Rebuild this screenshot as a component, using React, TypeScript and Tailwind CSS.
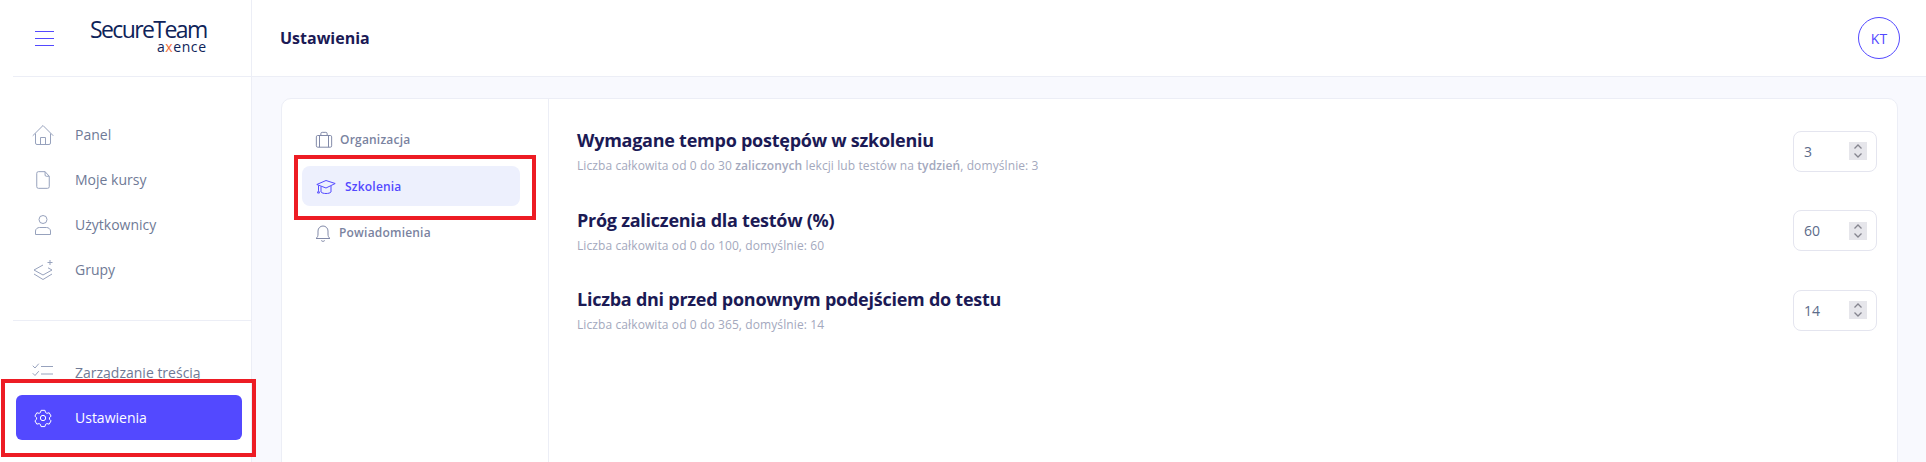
import type { ReactNode } from "react";

const iconClass = "h-6 w-6 shrink-0";

function HomeIcon() {
  return (
    <svg viewBox="0 0 24 24" fill="none" stroke="#97a2bd" strokeWidth="1" className={iconClass}>
      <path d="M2 12.500 12 2.500l10 10" strokeLinecap="round" strokeLinejoin="round" />
      <path d="M4.500 10.500V20A1.500 1.500 0 0 0 6 21.500h12a1.500 1.500 0 0 0 1.500-1.500v-9.500" />
      <path d="M9.500 21.500V14.500h5v7" />
    </svg>
  );
}

function FileIcon() {
  return (
    <svg viewBox="0 0 24 24" fill="none" stroke="#97a2bd" strokeWidth="1.200" className="mx-[2px] h-5 w-5 shrink-0">
      <path d="M6.500 2h8l5 5.500V20a2 2 0 0 1-2 2h-11a2 2 0 0 1-2-2V4a2 2 0 0 1 2-2Z" strokeLinejoin="round" />
      <path d="M14.500 2v4A1.500 1.500 0 0 0 16 7.500h3.500" />
    </svg>
  );
}

function UserIcon() {
  return (
    <svg viewBox="0 0 24 24" fill="none" stroke="#97a2bd" strokeWidth="1" className={iconClass}>
      <circle cx="12" cy="6.500" r="4" />
      <path d="M4.500 21.500V18c0-2 2-3.500 4-3.500h7c2 0 4 1.500 4 3.500v3.500Z" strokeLinejoin="round" />
    </svg>
  );
}

function LayersIcon() {
  return (
    <svg viewBox="0 0 24 24" fill="none" stroke="#97a2bd" strokeWidth="1" className={iconClass}>
      <path d="M12 7 3 12l9 5 9-5-4-2.200" strokeLinejoin="round" />
      <path d="m3 16 9 5.500 9-5.500" strokeLinejoin="round" />
      <path d="M19 2v5M16.500 4.500h5" />
    </svg>
  );
}

function ChecklistIcon() {
  return (
    <svg viewBox="0 0 24 24" fill="none" stroke="#97a2bd" strokeWidth="1" className={iconClass}>
      <path d="m2 5 2 2 3.500-4M2 12.500l2 2 3.500-4M3 20h3" strokeLinecap="round" strokeLinejoin="round" />
      <path d="M10 5.500h12M10 13h12M10 20.500h12" />
    </svg>
  );
}

function GearIcon() {
  return (
    <svg viewBox="0 0 24 24" fill="none" stroke="#ffffff" strokeWidth="1.200" className="mx-[2px] h-5 w-5 shrink-0">
      <circle cx="12" cy="12" r="3.200" />
      <path
        d="M9.700 2.800h4.600l.8 2.700 1.600.9 2.700-.7 2.300 4-2 2 .1 1.800 1.900 1.900-2.300 4-2.700-.7-1.600.9-.8 2.700H9.700l-.8-2.700-1.600-.9-2.700.7-2.300-4 2-1.900v-1.800l-2-2 2.300-4 2.700.7 1.600-.9Z"
        strokeLinejoin="round"
      />
    </svg>
  );
}

function BriefcaseIcon() {
  return (
    <svg viewBox="0 0 20 20" fill="none" stroke="#8189a8" strokeWidth="1.100" className="h-[18px] w-[18px] shrink-0">
      <rect x="1.500" y="5" width="17" height="13" rx="1.500" />
      <path d="M6.500 5V3A1.500 1.500 0 0 1 8 1.500h4A1.500 1.500 0 0 1 13.500 3v2M5 5v13M15 5v13" />
    </svg>
  );
}

function CapIcon() {
  return (
    <svg viewBox="0 0 20 20" fill="none" stroke="#5349ff" strokeWidth="1" className="h-5 w-5 shrink-0">
      <path d="M.8 7.500 10 3.500l9.200 3-9.200 4.500Z" strokeLinejoin="round" />
      <path d="M5 9.500V15c1.500 2 8.500 2 10 0V9" />
      <path d="M2.500 8.500v5M1.500 16l1-2.500 1 2.500Z" strokeLinejoin="round" />
    </svg>
  );
}

function BellIcon() {
  return (
    <svg viewBox="0 0 20 20" fill="none" stroke="#8189a8" strokeWidth="1" className="h-5 w-5 shrink-0">
      <path d="M3 15.500c1.500-1 2-2.500 2-4.500V8a5 5 0 0 1 10 0v3c0 2 .5 3.500 2 4.500Z" strokeLinejoin="round" />
      <path d="M8.500 17.800c.8.800 2.200.8 3 0" strokeLinecap="round" />
    </svg>
  );
}

function NavItem({ icon, label }: { icon: ReactNode; label: string }) {
  return (
    <div className="flex h-[45px] items-center pl-[31px] text-[14px] text-[#6f7a96]">
      {icon}
      <span className="ml-[20px]">{label}</span>
    </div>
  );
}

function SubNavItem({ icon, label, spacing }: { icon: ReactNode; label: string; spacing: string }) {
  return (
    <div className={`flex h-[46px] items-center text-[12px] font-semibold tracking-[0.2px] text-[#7a83a0] ${spacing}`}>
      {icon}
      <span>{label}</span>
    </div>
  );
}

function NumberBox({ value }: { value: string }) {
  return (
    <div className="flex h-[41px] w-[84px] shrink-0 items-center justify-between rounded-[8px] border border-[#e4e5ef] pl-[10px] pr-[9px] text-[14px] text-[#5c6b8a]">
      <span>{value}</span>
      <div className="flex h-[18px] w-[18px] items-center justify-center bg-[#e6e6eb]">
        <svg viewBox="0 0 18 18" fill="none" stroke="#85858f" strokeWidth="1.300" className="h-[18px] w-[18px]">
          <path d="m5.500 6.500 3.500-3.500 3.500 3.500M5.500 11.500l3.500 3.500 3.500-3.500" />
        </svg>
      </div>
    </div>
  );
}

function SettingRow({ title, hint, value }: { title: string; hint: ReactNode; value: string }) {
  return (
    <div className="flex h-[79.7px] items-start justify-between">
      <div>
        <div className="text-[18px] font-bold leading-[26px] tracking-[-0.25px] text-[#1b1a55]">{title}</div>
        <div className="mt-[5px] text-[12px] leading-[16px] tracking-[0.1px] text-[#a3a8bd]">{hint}</div>
      </div>
      <div className="pt-[3.6px]">
        <NumberBox value={value} />
      </div>
    </div>
  );
}

export default function App() {
  return (
    <div className="relative flex h-[462px] w-[1926px] overflow-hidden bg-white font-['Open_Sans',sans-serif]">
      <aside className="flex w-[252px] shrink-0 flex-col border-r border-[#eceef6] bg-white">
        <div className="ml-[13px] flex h-[77px] shrink-0 items-center border-b border-[#eceef6] pl-[22px]">
          <div className="flex h-[15px] w-[19px] flex-col justify-between">
            <span className="h-px w-full bg-[#5349ff]" />
            <span className="h-px w-full bg-[#5349ff]" />
            <span className="h-px w-full bg-[#5349ff]" />
          </div>
          <div className="mb-[7px] ml-[36px] flex flex-col items-end">
            <div className="text-[23px] leading-[24px] tracking-[-1.6px] text-[#0e2359]">SecureTeam</div>
            <div className="text-[14px] leading-[12px] tracking-[0.6px] text-[#0e2359]">
              a<span className="text-[#f0703c]">x</span>ence
            </div>
          </div>
        </div>
        <nav className="flex h-[243px] shrink-0 flex-col pt-[35px]">
          <NavItem icon={<HomeIcon />} label="Panel" />
          <NavItem icon={<FileIcon />} label="Moje kursy" />
          <NavItem icon={<UserIcon />} label="Użytkownicy" />
          <NavItem icon={<LayersIcon />} label="Grupy" />
        </nav>
        <div className="ml-[13px] flex-1 border-t border-[#eceef6] pt-[29px]">
          <div className="-ml-[13px]">
            <NavItem icon={<ChecklistIcon />} label="Zarządzanie treścią" />
            <div className="ml-[16px] flex h-[45px] w-[226px] items-center rounded-[6px] bg-[#5349ff] pl-[15px] text-[14px] text-white">
              <GearIcon />
              <span className="ml-[20px]">Ustawienia</span>
            </div>
          </div>
        </div>
      </aside>

      <main className="flex min-w-0 flex-1 flex-col bg-[#f8f9fe]">
        <header className="flex h-[77px] shrink-0 items-center justify-between border-b border-[#eceef6] bg-white pl-[28px] pr-[26px]">
          <h1 className="text-[16px] font-bold text-[#1b1a55]">Ustawienia</h1>
          <div className="flex h-[42px] w-[42px] items-center justify-center rounded-full border border-[#5349ff] text-[14px] text-[#5349ff]">
            KT
          </div>
        </header>
        <div className="flex-1 pl-[29px] pr-[28px] pt-[21px]">
          <section className="flex h-[400px] rounded-t-[10px] border border-[#eceef6] bg-white">
            <div className="w-[267px] shrink-0 border-r border-[#eceef6] pt-[18px]">
              <SubNavItem icon={<BriefcaseIcon />} label="Organizacja" spacing="gap-[7px] pl-[33px]" />
              <div className="ml-[20px] mt-[3px] flex h-[40px] w-[218px] items-center gap-[9px] rounded-[8px] bg-[#edf0fd] pl-[14px] pt-[1px] text-[12px] font-semibold tracking-[0.2px] text-[#5349ff]">
                <CapIcon />
                <span>Szkolenia</span>
              </div>
              <div className="mt-[4px]">
                <SubNavItem icon={<BellIcon />} label="Powiadomienia" spacing="gap-[6px] pl-[31px]" />
              </div>
            </div>
            <div className="flex-1 pl-[28px] pr-[20px] pt-[28px]">
              <SettingRow
                title="Wymagane tempo postępów w szkoleniu"
                value="3"
                hint={
                  <>
                    Liczba całkowita od 0 do 30 <b className="font-semibold">zaliczonych</b> lekcji lub testów na{" "}
                    <b className="font-semibold">tydzień</b>, domyślnie: 3
                  </>
                }
              />
              <SettingRow title="Próg zaliczenia dla testów (%)" value="60" hint="Liczba całkowita od 0 do 100, domyślnie: 60" />
              <SettingRow
                title="Liczba dni przed ponownym podejściem do testu"
                value="14"
                hint="Liczba całkowita od 0 do 365, domyślnie: 14"
              />
            </div>
          </section>
        </div>
      </main>

      {/* red annotation frames drawn over the screenshot */}
      <div className="absolute left-[1px] top-[379px] h-[78px] w-[255px] border-[4px] border-[#ed1c24]" />
      <div className="absolute left-[294px] top-[155px] h-[65px] w-[242px] border-[4px] border-[#ed1c24]" />
    </div>
  );
}
